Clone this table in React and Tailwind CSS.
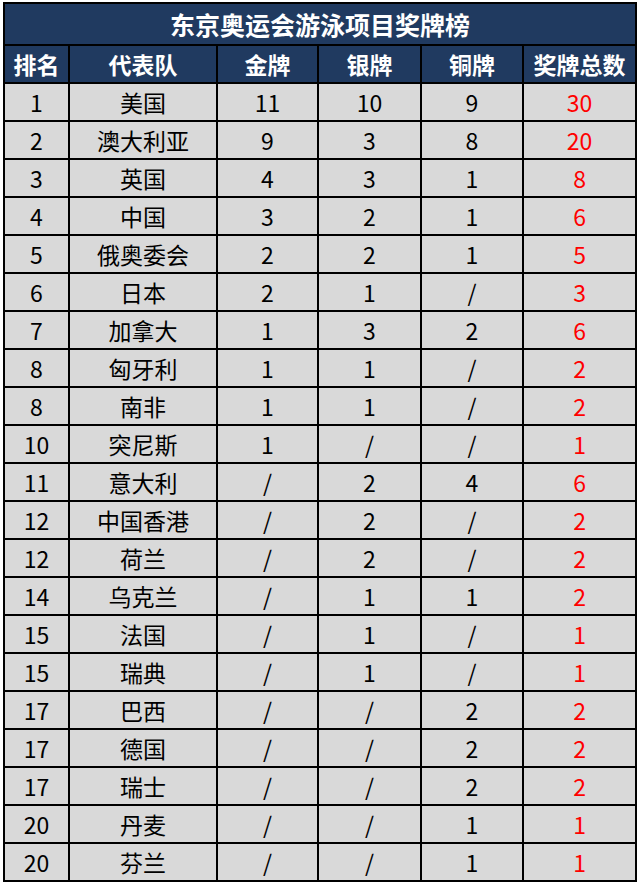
const rows = [
  ['1', '美国', '11', '10', '9', '30'],
  ['2', '澳大利亚', '9', '3', '8', '20'],
  ['3', '英国', '4', '3', '1', '8'],
  ['4', '中国', '3', '2', '1', '6'],
  ['5', '俄奥委会', '2', '2', '1', '5'],
  ['6', '日本', '2', '1', '/', '3'],
  ['7', '加拿大', '1', '3', '2', '6'],
  ['8', '匈牙利', '1', '1', '/', '2'],
  ['8', '南非', '1', '1', '/', '2'],
  ['10', '突尼斯', '1', '/', '/', '1'],
  ['11', '意大利', '/', '2', '4', '6'],
  ['12', '中国香港', '/', '2', '/', '2'],
  ['12', '荷兰', '/', '2', '/', '2'],
  ['14', '乌克兰', '/', '1', '1', '2'],
  ['15', '法国', '/', '1', '/', '1'],
  ['15', '瑞典', '/', '1', '/', '1'],
  ['17', '巴西', '/', '/', '2', '2'],
  ['17', '德国', '/', '/', '2', '2'],
  ['17', '瑞士', '/', '/', '2', '2'],
  ['20', '丹麦', '/', '/', '1', '1'],
  ['20', '芬兰', '/', '/', '1', '1'],
]

const heads = ['排名', '代表队', '金牌', '银牌', '铜牌', '奖牌总数']
const widths = ['w-[65px]', 'w-[148px]', 'w-[101px]', 'w-[103px]', 'w-[102px]', 'w-[113px]']

export default function App() {
  return (
    <div
      className="w-[640px] h-[888px] bg-white overflow-hidden pt-[2px] pl-[3px]"
      style={{ fontFamily: '"Noto Sans CJK SC", "Noto Sans", sans-serif' }}
    >
      <table className="border-collapse table-fixed w-[632px]">
        <colgroup>
          {widths.map((w, i) => <col key={i} className={w} />)}
        </colgroup>
        <thead>
          <tr className="h-[42px] bg-[#203a60]">
            <th colSpan={6} className="border-2 border-black text-white text-[25px] font-bold text-center leading-none">
              东京奥运会游泳项目奖牌榜
            </th>
          </tr>
          <tr className="h-[38px] bg-[#203a60]">
            {heads.map((h, i) => (
              <th key={i} className="border-2 border-black text-white text-[23px] font-bold text-center leading-none">
                {h}
              </th>
            ))}
          </tr>
        </thead>
        <tbody>
          {rows.map((r, i) => (
            <tr key={i} className="h-[38px] bg-[#d9d9d9]">
              {r.map((c, j) => (
                <td
                  key={j}
                  className={`border-2 border-black text-center text-[23px] leading-none ${j === 5 ? 'text-[#ff0000]' : 'text-black'}`}
                >
                  {c}
                </td>
              ))}
            </tr>
          ))}
        </tbody>
      </table>
    </div>
  )
}
